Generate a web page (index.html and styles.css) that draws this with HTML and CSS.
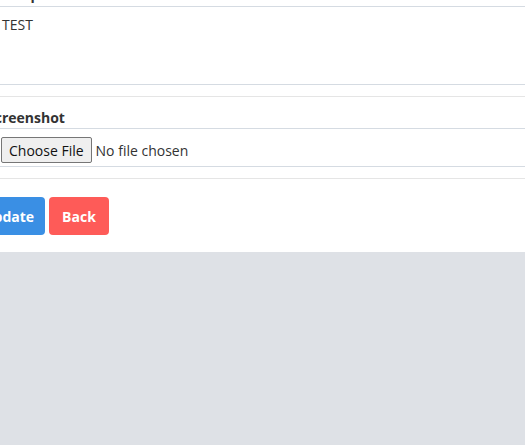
FILE: index.html
```html
<!DOCTYPE html>
<html lang="en">

<head>
    <meta charset="UTF-8">
    <meta name="viewport" content="width=device-width, initial-scale=1.0">
    <title>Edit issue</title>
    <link rel="stylesheet" href="styles.css">
</head>

<body>

    <div class="panel">
        <div class="field">
            <label class="field-label" for="desc">Description</label>
            <textarea id="desc" class="field-text">TEST</textarea>
        </div>
        <hr class="sep">
        <div class="field">
            <label class="field-label" for="shot">Screenshot</label>
            <div class="file-box">
                <input id="shot" type="file">
            </div>
        </div>
        <hr class="sep">
        <div class="actions">
            <button class="btn btn-blue">Update</button>
            <button class="btn btn-red">Back</button>
        </div>
    </div>

</body>

</html>
```

FILE: styles.css
```css
* {
    margin: 0;
    padding: 0;
    box-sizing: border-box;
}

html,
body {
    overflow: hidden;
}

body {
    background: #dee1e6;
    font-family: "Open Sans", "Liberation Sans", sans-serif;
    font-size: 14px;
    color: #212529;
}

.panel {
    margin: -15px -30px 0 -13px;
    padding-bottom: 17px;
    background: #fff;
}

.field-label {
    display: block;
    line-height: 20px;
    font-weight: 700;
    color: #333;
}

.field-text {
    display: block;
    width: 100%;
    height: 79px;
    margin-top: 1px;
    padding: 8px 14px;
    border: 1px solid #d5dbe2;
    font: 14px/20px "Open Sans", "Liberation Sans", sans-serif;
    color: #333;
    resize: none;
    outline: none;
}

.sep {
    margin: 11px 0;
    border: 0;
    border-top: 1px solid #e5e5e5;
}

.file-box {
    height: 39px;
    padding: 8px 13px 0;
    border: 1px solid #d5dbe2;
}

.file-box input {
    font: 14px "Open Sans", "Liberation Sans", sans-serif;
    color: #333;
}

.file-box input::file-selector-button {
    height: 26px;
    margin-right: 4px;
    padding: 0 7px;
    border: 1px solid #767676;
    border-radius: 2px;
    background: #efefef;
    font: 14px "Open Sans", "Liberation Sans", sans-serif;
    color: #111;
}

.actions {
    display: flex;
    gap: 4px;
    margin-top: 18px;
    margin-left: -19px;
}

.btn {
    height: 38px;
    padding: 0 13px;
    border: 0;
    border-radius: 4px;
    font: 700 14px "Open Sans", "Liberation Sans", sans-serif;
    color: #fff;
    cursor: pointer;
}

.btn-blue {
    padding: 0 11px 0 15px;
    background: #3a8fe4;
}

.btn-red {
    background: #fe5b58;
}
```
